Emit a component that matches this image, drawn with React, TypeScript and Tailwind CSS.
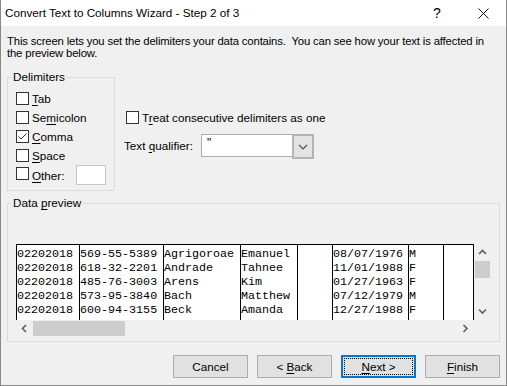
import React from 'react';

const ui = { fontFamily: '"Liberation Sans", Arial, sans-serif' };
const mono = { fontFamily: '"Liberation Mono", "Courier New", monospace' };

const columns = [
  { w: 'w-[63px]', rows: ['02202018', '02202018', '02202018', '02202018', '02202018'] },
  { w: 'w-[84px]', rows: ['569-55-5389', '618-32-2201', '485-76-3003', '573-95-3840', '600-94-3155'] },
  { w: 'w-[77px]', rows: ['Agrigoroae', 'Andrade', 'Arens', 'Bach', 'Beck'] },
  { w: 'w-[57px]', rows: ['Emanuel', 'Tahnee', 'Kim', 'Matthew', 'Amanda'] },
  { w: 'w-[35px]', rows: ['', '', '', '', ''] },
  { w: 'w-[76px]', rows: ['08/07/1976', '11/01/1988', '01/27/1963', '07/12/1979', '12/27/1988'] },
  { w: 'w-[35px]', rows: ['M', 'F', 'F', 'M', 'F'] },
  { w: 'w-[30px]', rows: ['', '', '', '', ''] },
];

function Box({ checked }: { checked?: boolean }) {
  return (
    <span className="w-[13px] h-[13px] border border-[#333333] bg-white shrink-0 flex items-center justify-center">
      {checked && (
        <svg width="11" height="11" viewBox="0 0 11 11">
          <path d="M1.5 5.5 L4 8 L9.5 2.5" fill="none" stroke="#333333" strokeWidth="1" />
        </svg>
      )}
    </span>
  );
}

function Check({ pre, key1, post, checked }: { pre?: string; key1: string; post: string; checked?: boolean }) {
  return (
    <div className="flex items-center h-[19px]">
      <Box checked={checked} />
      <span className="ml-[3px]">
        {pre}
        <span className="underline underline-offset-[2px]">{key1}</span>
        {post}
      </span>
    </div>
  );
}

function Chevron({ dir }: { dir: 'up' | 'down' | 'left' | 'right' }) {
  const d = {
    up: 'M1 5 L4.5 1.5 L8 5',
    down: 'M1 1.5 L4.5 5 L8 1.5',
    left: 'M5 1 L1.5 4.5 L5 8',
    right: 'M1.5 1 L5 4.5 L1.5 8',
  }[dir];
  const vertical = dir === 'up' || dir === 'down';
  return (
    <svg width={vertical ? 9 : 7} height={vertical ? 7 : 9} viewBox={vertical ? '0 0 9 7' : '0 0 7 9'}>
      <path d={d} fill="none" stroke="#606060" strokeWidth="1.6" />
    </svg>
  );
}

function Button({ children, focused }: { children: React.ReactNode; focused?: boolean }) {
  if (focused) {
    return (
      <div className="w-[75px] h-[23px] border-2 border-[#0078d7] bg-[#e1e1e1] p-[1px]">
        <div className="w-full h-full border border-dotted border-black flex items-center justify-center">{children}</div>
      </div>
    );
  }
  return (
    <div className="w-[75px] h-[23px] border border-[#adadad] bg-[#e1e1e1] flex items-center justify-center">{children}</div>
  );
}

export default function App() {
  return (
    <div className="w-[507px] h-[386px] bg-[#f0f0f0] border-l border-r border-b border-[#888888] flex flex-col text-[11.7px] text-black overflow-hidden" style={ui}>
      {/* title bar */}
      <div className="h-[26px] bg-white flex items-center shrink-0">
        <span className="pl-[4px] whitespace-nowrap">Convert Text to Columns Wizard - Step 2 of 3</span>
        <span className="ml-auto w-[46px] flex justify-center text-[14px]">?</span>
        <span className="w-[46px] flex justify-center">
          <svg width="11" height="11" viewBox="0 0 11 11">
            <path d="M0.5 0.5 L10.5 10.5 M10.5 0.5 L0.5 10.5" stroke="#111111" strokeWidth="1" />
          </svg>
        </span>
      </div>

      <div className="flex flex-col pl-[6px] pr-[6px]">
        <p className="pt-[9px] leading-[12px] whitespace-nowrap text-[11.3px] tracking-[-0.15px]">
          This screen lets you set the delimiters your data contains.&nbsp; You can see how your text is affected in
          <br />
          the preview below.
        </p>

        <div className="flex mt-[11px]">
          <fieldset className="w-[108px] h-[121px] border border-[#dcdcdc] pl-[8px]">
            <legend className="ml-[-4px] px-[1px] leading-[14px]">Delimiters</legend>
            <div className="flex flex-col pt-[5px]">
              <Check key1="T" post="ab" />
              <Check pre="Se" key1="m" post="icolon" />
              <Check key1="C" post="omma" checked />
              <Check key1="S" post="pace" />
              <div className="flex items-start h-[20px]">
                <span className="mt-[2px]"><Box /></span>
                <span className="ml-[3px] mt-[2px]">
                  <span className="underline underline-offset-[2px]">O</span>ther:
                </span>
                <span className="ml-[12px] w-[30px] h-[20px] bg-white border border-[#c8c8c8]" />
              </div>
            </div>
          </fieldset>

          <div className="flex flex-col ml-[9px] pt-[38px]">
            <div className="flex items-center h-[19px] pl-[2px]">
              <Box />
              <span className="ml-[3px]">
                T<span className="underline underline-offset-[2px]">r</span>eat consecutive delimiters as one
              </span>
            </div>
            <div className="flex items-center mt-[7px]">
              <span className="w-[77px]">
                Text <span className="underline underline-offset-[2px]">q</span>ualifier:
              </span>
              <div className="w-[113px] h-[23px] bg-white border border-[#adadad] flex">
                <span className="flex-1 pl-[5px] leading-[16px] text-[12px]">"</span>
                <span className="w-[18px] h-full border-2 border-[#b4b4b4] bg-[#e3e3e3] flex items-center justify-center -mt-[1px] -mb-[1px] -mr-[1px] box-content">
                  <svg width="10" height="6" viewBox="0 0 10 6">
                    <path d="M1 1 L5 5 L9 1" fill="none" stroke="#505050" strokeWidth="1.2" />
                  </svg>
                </span>
              </div>
            </div>
          </div>
        </div>

        <fieldset className="mt-[5px] w-[493px] h-[146px] border border-[#dcdcdc] pl-[8px]">
          <legend className="ml-[-4px] px-[1px] leading-[14px]">
            Data <span className="underline underline-offset-[2px]">p</span>review
          </legend>
          <div className="mt-[34px] w-[475px] h-[93px] grid grid-cols-[458px_17px] grid-rows-[76px_17px]">
            <div className="flex bg-white border-t border-l border-black overflow-hidden text-[11.7px]" style={mono}>
              {columns.map((c, i) => (
                <div key={i} className={`${c.w} shrink-0 border-r border-black flex flex-col pt-[2px]`}>
                  {c.rows.map((r, j) => (
                    <span key={j} className="leading-[14px] h-[14px] whitespace-pre overflow-hidden">{r}</span>
                  ))}
                </div>
              ))}
            </div>
            <div className="flex flex-col items-center">
              <div className="h-[17px] flex items-center justify-center"><Chevron dir="up" /></div>
              <div className="w-[15px] h-[17px] bg-[#cdcdcd]" />
              <div className="flex-1" />
              <div className="h-[17px] flex items-center justify-center"><Chevron dir="down" /></div>
            </div>
            <div className="flex items-center">
              <div className="w-[17px] flex justify-center"><Chevron dir="left" /></div>
              <div className="w-[92px] h-[15px] bg-[#cdcdcd]" />
              <div className="flex-1" />
              <div className="w-[17px] flex justify-center"><Chevron dir="right" /></div>
            </div>
            <div />
          </div>
        </fieldset>

        <div className="mt-[13px] flex justify-end gap-[9px]">
          <Button>Cancel</Button>
          <Button>
            &lt; <span className="underline underline-offset-[2px] ml-[3px]">B</span>ack
          </Button>
          <Button focused>
            <span className="underline underline-offset-[2px]">N</span>ext &gt;
          </Button>
          <Button>
            <span className="underline underline-offset-[2px]">F</span>inish
          </Button>
        </div>
      </div>
    </div>
  );
}
